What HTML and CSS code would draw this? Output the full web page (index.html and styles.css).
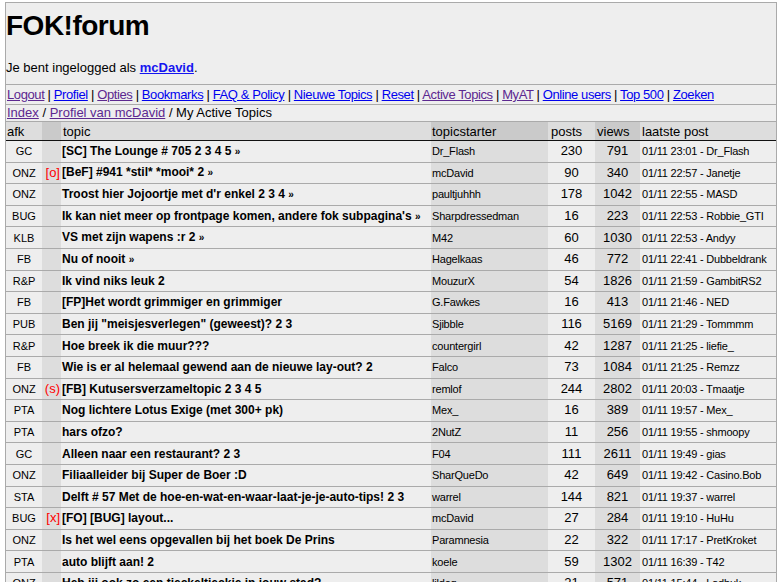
FILE: index.html
```html
<!DOCTYPE html>
<html lang="nl">
<head>
    <meta charset="UTF-8">
    <title>FOK!forum - My Active Topics</title>
    <link rel="stylesheet" href="styles.css">
</head>
<body>
    <div class="page">
        <div class="masthead">
            <h1>FOK!forum</h1>
            <p class="login">Je bent ingelogged als <a class="user" href="#">mcDavid</a>.</p>
        </div>

        <div class="menu">
            <a class="seen" href="#">Logout</a> | <a href="#">Profiel</a> | <a class="seen" href="#">Opties</a> | <a href="#">Bookmarks</a> | <a href="#">FAQ &amp; Policy</a> | <a href="#">Nieuwe Topics</a> | <a href="#">Reset</a> | <a class="seen" href="#">Active Topics</a> | <a class="seen" href="#">MyAT</a> | <a href="#">Online users</a> | <a href="#">Top 500</a> | <a href="#">Zoeken</a>
        </div>

        <div class="crumbs">
            <a class="seen" href="#">Index</a> / <a class="seen" href="#">Profiel van mcDavid</a> / My Active Topics
        </div>

        <table class="topics">
            <colgroup>
                <col class="c-afk">
                <col class="c-mark">
                <col class="c-topic">
                <col class="c-starter">
                <col class="c-posts">
                <col class="c-views">
                <col class="c-last">
            </colgroup>
            <thead>
                <tr>
                    <th>afk</th>
                    <th class="dark"></th>
                    <th>topic</th>
                    <th class="dark">topicstarter</th>
                    <th>posts</th>
                    <th class="dark">views</th>
                    <th>laatste post</th>
                </tr>
            </thead>
            <tbody>
                <tr><td class="afk">GC</td><td class="mark"></td><td class="topic">[SC] The Lounge # 705 2 3 4 5 <span class="more">&raquo;</span></td><td class="starter">Dr_Flash</td><td class="num">230</td><td class="num dark">791</td><td class="last">01/11 23:01 - Dr_Flash</td></tr>
                <tr><td class="afk">ONZ</td><td class="mark">[o]</td><td class="topic">[BeF] #941 *stil* *mooi* 2 <span class="more">&raquo;</span></td><td class="starter">mcDavid</td><td class="num">90</td><td class="num dark">340</td><td class="last">01/11 22:57 - Janetje</td></tr>
                <tr><td class="afk">ONZ</td><td class="mark"></td><td class="topic">Troost hier Jojoortje met d'r enkel 2 3 4 <span class="more">&raquo;</span></td><td class="starter">paultjuhhh</td><td class="num">178</td><td class="num dark">1042</td><td class="last">01/11 22:55 - MASD</td></tr>
                <tr><td class="afk">BUG</td><td class="mark"></td><td class="topic">Ik kan niet meer op frontpage komen, andere fok subpagina's <span class="more">&raquo;</span></td><td class="starter">Sharpdressedman</td><td class="num">16</td><td class="num dark">223</td><td class="last">01/11 22:53 - Robbie_GTI</td></tr>
                <tr><td class="afk">KLB</td><td class="mark"></td><td class="topic">VS met zijn wapens :r 2 <span class="more">&raquo;</span></td><td class="starter">M42</td><td class="num">60</td><td class="num dark">1030</td><td class="last">01/11 22:53 - Andyy</td></tr>
                <tr><td class="afk">FB</td><td class="mark"></td><td class="topic">Nu of nooit <span class="more">&raquo;</span></td><td class="starter">Hagelkaas</td><td class="num">46</td><td class="num dark">772</td><td class="last">01/11 22:41 - Dubbeldrank</td></tr>
                <tr><td class="afk">R&amp;P</td><td class="mark"></td><td class="topic">Ik vind niks leuk 2</td><td class="starter">MouzurX</td><td class="num">54</td><td class="num dark">1826</td><td class="last">01/11 21:59 - GambitRS2</td></tr>
                <tr><td class="afk">FB</td><td class="mark"></td><td class="topic">[FP]Het wordt grimmiger en grimmiger</td><td class="starter">G.Fawkes</td><td class="num">16</td><td class="num dark">413</td><td class="last">01/11 21:46 - NED</td></tr>
                <tr><td class="afk">PUB</td><td class="mark"></td><td class="topic">Ben jij "meisjesverlegen" (geweest)? 2 3</td><td class="starter">Sjibble</td><td class="num">116</td><td class="num dark">5169</td><td class="last">01/11 21:29 - Tommmm</td></tr>
                <tr><td class="afk">R&amp;P</td><td class="mark"></td><td class="topic">Hoe breek ik die muur???</td><td class="starter">countergirl</td><td class="num">42</td><td class="num dark">1287</td><td class="last">01/11 21:25 - liefie_</td></tr>
                <tr><td class="afk">FB</td><td class="mark"></td><td class="topic">Wie is er al helemaal gewend aan de nieuwe lay-out? 2</td><td class="starter">Falco</td><td class="num">73</td><td class="num dark">1084</td><td class="last">01/11 21:25 - Remzz</td></tr>
                <tr><td class="afk">ONZ</td><td class="mark">(s)</td><td class="topic">[FB] Kutusersverzameltopic 2 3 4 5</td><td class="starter">remlof</td><td class="num">244</td><td class="num dark">2802</td><td class="last">01/11 20:03 - Tmaatje</td></tr>
                <tr><td class="afk">PTA</td><td class="mark"></td><td class="topic">Nog lichtere Lotus Exige (met 300+ pk)</td><td class="starter">Mex_</td><td class="num">16</td><td class="num dark">389</td><td class="last">01/11 19:57 - Mex_</td></tr>
                <tr><td class="afk">PTA</td><td class="mark"></td><td class="topic">hars ofzo?</td><td class="starter">2NutZ</td><td class="num">11</td><td class="num dark">256</td><td class="last">01/11 19:55 - shmoopy</td></tr>
                <tr><td class="afk">GC</td><td class="mark"></td><td class="topic">Alleen naar een restaurant? 2 3</td><td class="starter">F04</td><td class="num">111</td><td class="num dark">2611</td><td class="last">01/11 19:49 - gias</td></tr>
                <tr><td class="afk">ONZ</td><td class="mark"></td><td class="topic">Filiaalleider bij Super de Boer :D</td><td class="starter">SharQueDo</td><td class="num">42</td><td class="num dark">649</td><td class="last">01/11 19:42 - Casino.Bob</td></tr>
                <tr><td class="afk">STA</td><td class="mark"></td><td class="topic">Delft # 57 Met de hoe-en-wat-en-waar-laat-je-je-auto-tips! 2 3</td><td class="starter">warrel</td><td class="num">144</td><td class="num dark">821</td><td class="last">01/11 19:37 - warrel</td></tr>
                <tr><td class="afk">BUG</td><td class="mark">[x]</td><td class="topic">[FO] [BUG] layout...</td><td class="starter">mcDavid</td><td class="num">27</td><td class="num dark">284</td><td class="last">01/11 19:10 - HuHu</td></tr>
                <tr><td class="afk">ONZ</td><td class="mark"></td><td class="topic">Is het wel eens opgevallen bij het boek De Prins</td><td class="starter">Paramnesia</td><td class="num">22</td><td class="num dark">322</td><td class="last">01/11 17:17 - PretKroket</td></tr>
                <tr><td class="afk">PTA</td><td class="mark"></td><td class="topic">auto blijft aan! 2</td><td class="starter">koele</td><td class="num">59</td><td class="num dark">1302</td><td class="last">01/11 16:39 - T42</td></tr>
                <tr><td class="afk">ONZ</td><td class="mark"></td><td class="topic">Heb jij ook zo een tieckeltieckje in jouw stad?</td><td class="starter">lildog</td><td class="num">21</td><td class="num dark">571</td><td class="last">01/11 15:44 - Ladbuk</td></tr>
            </tbody>
        </table>
    </div>
</body>
</html>
```

FILE: styles.css
```css
* {
    margin: 0;
    padding: 0;
    box-sizing: border-box;
}

body {
    font-family: "Liberation Sans", Arial, sans-serif;
    font-size: 13px;
    color: #000;
    background: #fff;
    padding: 2px 0 0 5px;
}

a {
    color: #0000ee;
}

a.seen {
    color: #5c2890;
}

.page {
    width: 772px;
    border: 1px solid #aaa;
    border-bottom: none;
    background: #eee;
}

.masthead {
    padding: 7px 0 9px;
    border-bottom: 1px solid #aaa;
}

.masthead h1 {
    font-size: 28px;
    line-height: 32px;
    letter-spacing: -0.5px;
}

.login {
    margin-top: 18px;
    line-height: 15px;
}

.login .user {
    font-weight: bold;
    color: #1515f0;
}

.menu {
    padding: 2px 1px;
    line-height: 15px;
    letter-spacing: -0.4px;
    border-bottom: 1px solid #aaa;
    white-space: nowrap;
}

.crumbs {
    padding: 0 1px 1px;
    line-height: 15px;
    border-bottom: 1px solid #aaa;
}

/* topic list */
.topics {
    width: 770px;
    table-layout: fixed;
    border-collapse: separate;
    border-spacing: 0;
}

.c-afk { width: 36px; }
.c-mark { width: 19px; }
.c-topic { width: 370px; }
.c-starter { width: 117px; }
.c-posts { width: 47px; }
.c-views { width: 45px; }
.c-last { width: 136px; }

.topics th {
    font-weight: normal;
    text-align: left;
    background: #ddd;
    line-height: 15px;
    padding: 2px 0 1px 1px;
    border-bottom: 1px solid #111;
    white-space: nowrap;
}

.topics th:nth-child(3) { padding-left: 2px; }
.topics th:nth-child(5) { padding-left: 3px; }
.topics th:nth-child(6),
.topics th:nth-child(7) { padding-left: 2px; }

.topics th.dark {
    background: #cacaca;
}

.topics tbody tr {
    height: 21.6px;
}

.topics td {
    border-bottom: 1px solid #aaa;
    line-height: 14px;
    vertical-align: middle;
    white-space: nowrap;
    overflow: hidden;
}

.topics td.dark,
.topics td.mark,
.topics td.starter {
    background: #ddd;
}

.afk {
    font-size: 11px;
    text-align: center;
}

.mark {
    color: #f00;
    font-size: 13px;
    text-align: right;
    padding-right: 1px;
}

.topic {
    font-weight: bold;
    font-size: 12px;
    padding-left: 1px;
}

.topic .more {
    font-size: 10px;
}

.starter {
    font-size: 11px;
    letter-spacing: -0.2px;
    padding-left: 1px;
}

.num {
    font-size: 13px;
    text-align: center;
}

.last {
    font-size: 11px;
    letter-spacing: -0.2px;
    padding-left: 2px;
}
```
